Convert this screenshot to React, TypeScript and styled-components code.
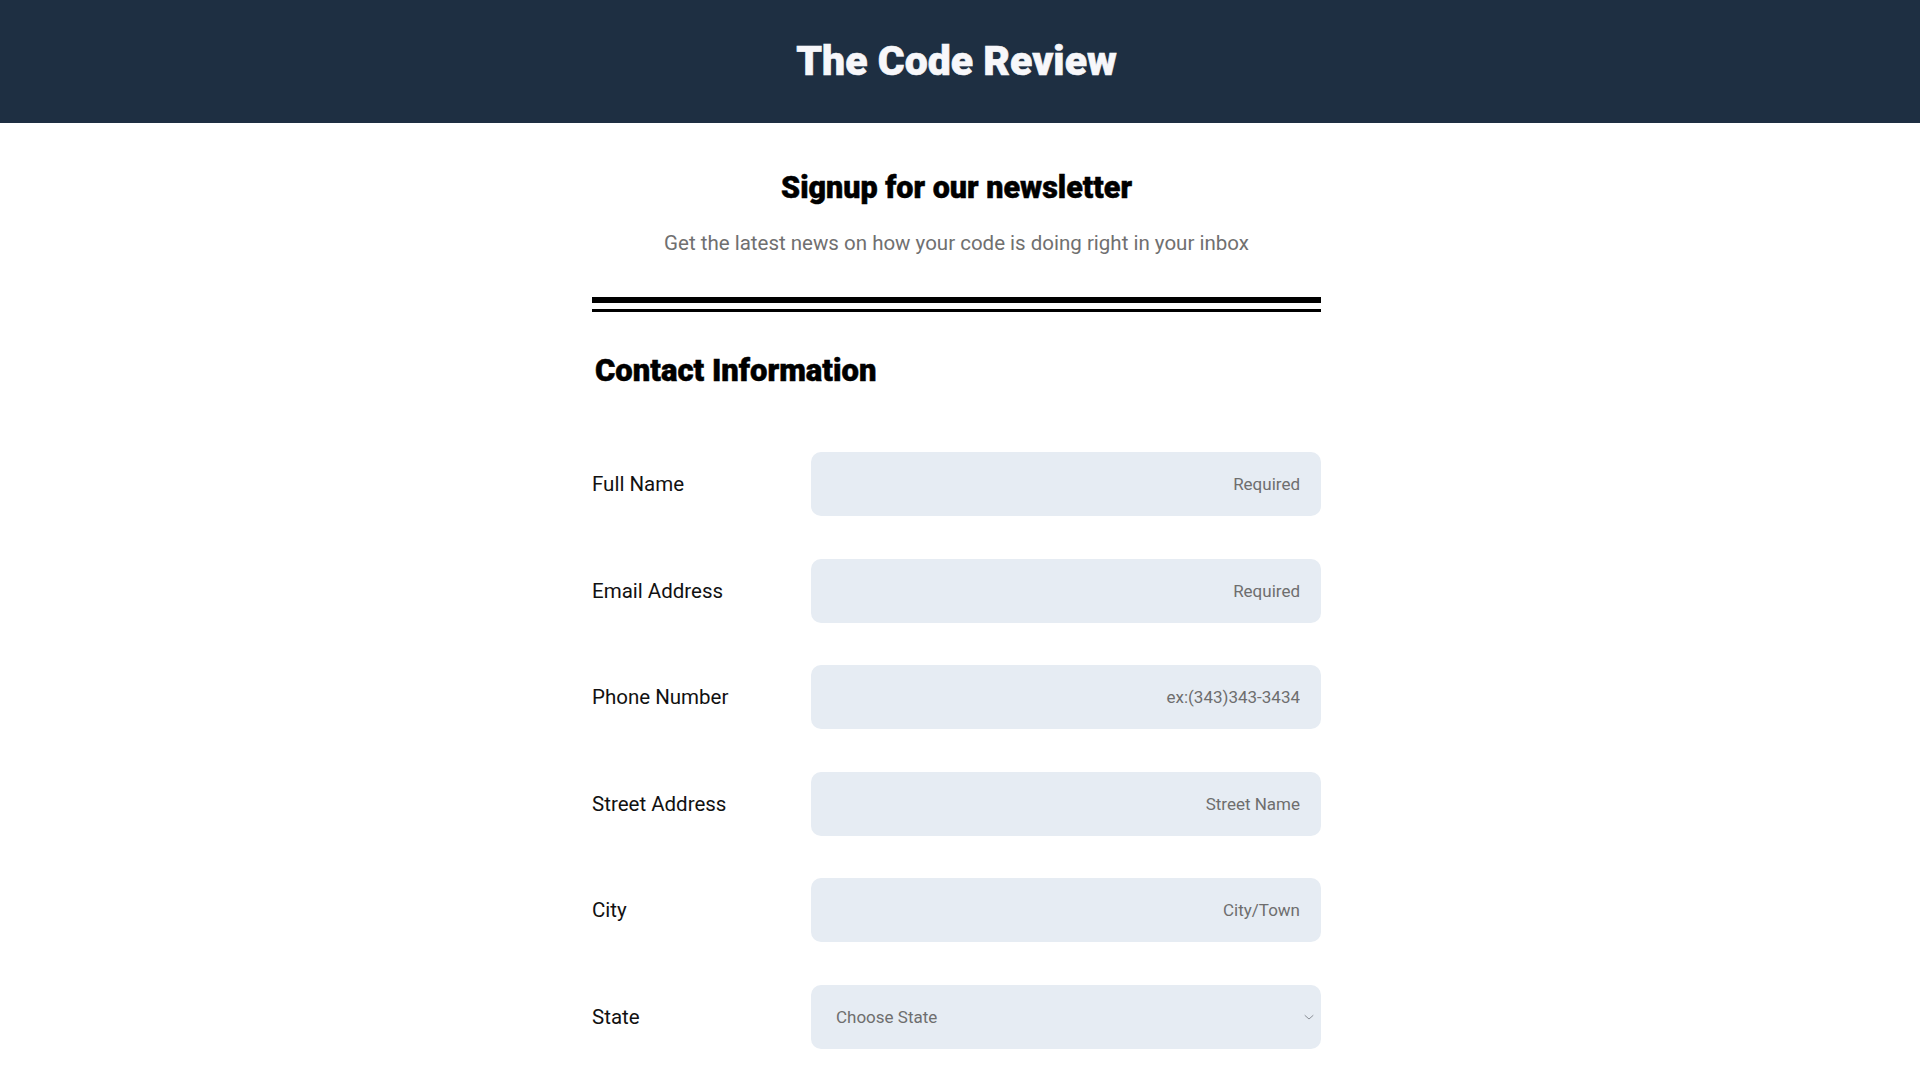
import React from "react";
import styled, { createGlobalStyle } from "styled-components";

const GlobalStyle = createGlobalStyle`
  * { box-sizing: border-box; }
  html, body { margin: 0; padding: 0; background: #ffffff; }
  body { font-family: Roboto, "Liberation Sans", Arial, sans-serif; color: #000; }
`;

const Header = styled.header`
  height: 123px;
  background: #1e2f42;
  display: flex;
  align-items: center;
  justify-content: center;
  padding-right: 7px;
`;

const Brand = styled.h1`
  margin: 0;
  color: #f7f7fa;
  font-family: Roboto, "Liberation Sans", sans-serif;
  font-weight: 900;
  font-size: 41px;
  line-height: 1;
  -webkit-text-stroke: 0.6px #f7f7fa;
`;

const Page = styled.main`
  padding-right: 7px;
`;

const Container = styled.div`
  width: 729px;
  margin: 0 auto;
  display: flex;
  flex-direction: column;
`;

const Title = styled.h2`
  margin: 47px 0 0;
  text-align: center;
  font-size: 30.5px;
  line-height: 36px;
  font-weight: 900;
  color: #000;
  -webkit-text-stroke: 0.5px #000;
`;

const Lead = styled.p`
  margin: 25px 0 0;
  text-align: center;
  font-size: 20.5px;
  line-height: 24px;
  color: #707070;
`;

const Rule = styled.div<{ $thick: number; $gap: number }>`
  height: ${(p) => p.$thick}px;
  margin-top: ${(p) => p.$gap}px;
  background: #000;
`;

const Section = styled.h3`
  margin: 41px 0 0 3px;
  font-size: 31px;
  line-height: 36px;
  font-weight: 900;
  color: #000;
  -webkit-text-stroke: 0.5px #000;
`;

const Form = styled.form`
  margin-top: 63px;
  display: grid;
  grid-template-columns: 219px 1fr;
  row-gap: 42.5px;
  align-items: center;
`;

const Label = styled.label`
  font-size: 20.5px;
  line-height: 24px;
  color: #111;
`;

const Field = styled.input`
  height: 64px;
  width: 100%;
  border: none;
  border-radius: 10px;
  background: #e6ecf3;
  padding: 0 21px;
  text-align: right;
  font-family: Roboto, "Liberation Sans", sans-serif;
  font-size: 17px;
  color: #333;
  outline: none;
  &::placeholder { color: #6e6e6e; opacity: 1; }
`;

const SelectWrap = styled.div`
  position: relative;
  height: 64px;
`;

const Select = styled.select`
  appearance: none;
  -webkit-appearance: none;
  width: 100%;
  height: 64px;
  border: none;
  border-radius: 10px;
  background: #e6ecf3;
  padding: 0 40px 0 25px;
  font-family: Roboto, "Liberation Sans", sans-serif;
  font-size: 17px;
  color: #6e6e6e;
  outline: none;
`;

const Chevron = styled.svg`
  position: absolute;
  right: 6px;
  top: 50%;
  transform: translateY(-50%);
  width: 12px;
  height: 12px;
  pointer-events: none;
`;

const fields = [
  { id: "name", label: "Full Name", placeholder: "Required" },
  { id: "email", label: "Email Address", placeholder: "Required" },
  { id: "phone", label: "Phone Number", placeholder: "ex:(343)343-3434" },
  { id: "street", label: "Street Address", placeholder: "Street Name" },
  { id: "city", label: "City", placeholder: "City/Town" },
];

export default function App() {
  return (
    <>
      <GlobalStyle />
      <Header>
        <Brand>The Code Review</Brand>
      </Header>
      <Page>
        <Container>
          <Title>Signup for our newsletter</Title>
          <Lead>Get the latest news on how your code is doing right in your inbox</Lead>
          <Rule $thick={6} $gap={42} />
          <Rule $thick={3} $gap={6} />
          <Section>Contact Information</Section>
          <Form onSubmit={(e) => e.preventDefault()}>
            {fields.map((f) => (
              <React.Fragment key={f.id}>
                <Label htmlFor={f.id}>{f.label}</Label>
                <Field id={f.id} placeholder={f.placeholder} />
              </React.Fragment>
            ))}
            <Label htmlFor="state">State</Label>
            <SelectWrap>
              <Select id="state" defaultValue="">
                <option value="" disabled>
                  Choose State
                </option>
                <option value="CA">California</option>
                <option value="NY">New York</option>
              </Select>
              <Chevron viewBox="0 0 12 12" fill="none">
                <path d="M2 4.5 L6 8 L10 4.5" stroke="#8a8f96" strokeWidth="1" strokeLinecap="round" strokeLinejoin="round" />
              </Chevron>
            </SelectWrap>
          </Form>
        </Container>
      </Page>
    </>
  );
}
